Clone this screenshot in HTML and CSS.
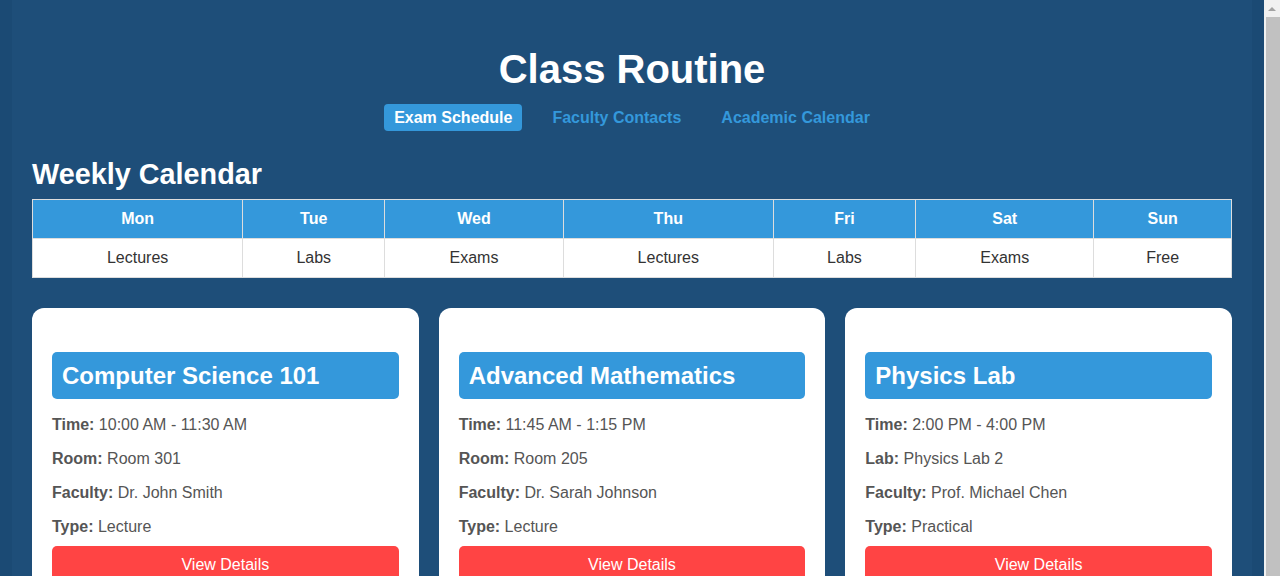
FILE: index.html
```
<!DOCTYPE html>
<html lang="en">
<head>
<meta charset="utf-8">
<title>Class Routine</title>
<link rel="stylesheet" href="styles.css">
</head>
<body>
<div class="container">
  <header class="header">
    <h1 class="title">Class Routine</h1>
    <nav class="nav">
      <a class="nav-link active" href="#">Exam Schedule</a>
      <a class="nav-link" href="#">Faculty Contacts</a>
      <a class="nav-link" href="#">Academic Calendar</a>
    </nav>
  </header>

  <h2 class="section-title">Weekly Calendar</h2>
  <table class="calendar">
    <thead>
      <tr><th>Mon</th><th>Tue</th><th>Wed</th><th>Thu</th><th>Fri</th><th>Sat</th><th>Sun</th></tr>
    </thead>
    <tbody>
      <tr><td>Lectures</td><td>Labs</td><td>Exams</td><td>Lectures</td><td>Labs</td><td>Exams</td><td>Free</td></tr>
    </tbody>
  </table>

  <div class="cards">
    <div class="card">
      <h3 class="card-title">Computer Science 101</h3>
      <p class="info"><strong>Time:</strong> 10:00 AM - 11:30 AM</p>
      <p class="info"><strong>Room:</strong> Room 301</p>
      <p class="info"><strong>Faculty:</strong> Dr. John Smith</p>
      <p class="info"><strong>Type:</strong> Lecture</p>
      <button class="details-btn">View Details</button>
    </div>
    <div class="card">
      <h3 class="card-title">Advanced Mathematics</h3>
      <p class="info"><strong>Time:</strong> 11:45 AM - 1:15 PM</p>
      <p class="info"><strong>Room:</strong> Room 205</p>
      <p class="info"><strong>Faculty:</strong> Dr. Sarah Johnson</p>
      <p class="info"><strong>Type:</strong> Lecture</p>
      <button class="details-btn">View Details</button>
    </div>
    <div class="card">
      <h3 class="card-title">Physics Lab</h3>
      <p class="info"><strong>Time:</strong> 2:00 PM - 4:00 PM</p>
      <p class="info"><strong>Lab:</strong> Physics Lab 2</p>
      <p class="info"><strong>Faculty:</strong> Prof. Michael Chen</p>
      <p class="info"><strong>Type:</strong> Practical</p>
      <button class="details-btn">View Details</button>
    </div>
  </div>
</div>
<div class="scrollbar" aria-hidden="true">
  <div class="scroll-arrow">
    <svg width="16" height="16" viewBox="0 0 16 16"><path d="M4 10 L8 6 L12 10 Z" fill="#a3a3a3"/></svg>
  </div>
  <div class="scroll-thumb"></div>
</div>
</body>
</html>
```

FILE: styles.css
```
* {
  box-sizing: border-box;
}

body {
  margin: 0;
  padding-right: 16px;
  background: #1b4a74;
  font-family: "Liberation Sans", Arial, sans-serif;
  color: #333;
}

.scrollbar {
  position: fixed;
  top: 0;
  right: 0;
  width: 16px;
  height: 100%;
  display: flex;
  flex-direction: column;
  background: #f1f1f1;
}

.scroll-arrow {
  height: 17px;
  display: flex;
  align-items: center;
  justify-content: center;
}

.scroll-thumb {
  flex: 1;
  margin-left: 2px;
  background: #c1c1c1;
}

.container {
  max-width: 1240px;
  margin: 0 auto;
  padding: 20px;
  background: #1e4e79;
}

.header {
  text-align: center;
}

.title {
  margin: 26px 0 12px;
  font-size: 40px;
  line-height: 46px;
  font-weight: bold;
  color: #fff;
}

.nav {
  display: flex;
  justify-content: center;
  gap: 20px;
}

.nav-link {
  padding: 4px 10px;
  border-radius: 4px;
  font-size: 16px;
  line-height: 19px;
  font-weight: bold;
  color: #3498db;
  text-decoration: none;
}

.nav-link.active {
  background: #3498db;
  color: #fff;
}

.section-title {
  margin: 27px 0 8px;
  font-size: 28.8px;
  line-height: 33px;
  font-weight: bold;
  color: #fff;
}

.calendar {
  width: 100%;
  border-collapse: collapse;
  background: #fff;
}

.calendar th,
.calendar td {
  padding: 10px;
  border: 1px solid #ddd;
  font-size: 16px;
  line-height: 18px;
  text-align: center;
}

.calendar th {
  background: #3498db;
  color: #fff;
  font-weight: bold;
}

.calendar td {
  color: #333;
}

.cards {
  display: grid;
  grid-template-columns: repeat(3, 1fr);
  gap: 20px;
  margin-top: 30px;
}

.card {
  background: #fff;
  border-radius: 12px;
  padding: 20px;
}

.card-title {
  margin: 24px 0 13px;
  padding: 10px;
  background: #3498db;
  color: #fff;
  border-radius: 5px;
  font-size: 24px;
  line-height: 27px;
  font-weight: bold;
}

.info {
  margin: 8px 0 6px;
  font-size: 16px;
  line-height: 26px;
  color: #555;
}

.info strong {
  color: #555;
}

.details-btn {
  display: block;
  width: 100%;
  margin: 0;
  padding: 10px;
  border: none;
  border-radius: 5px;
  background: #ff4444;
  color: #fff;
  font-family: "Liberation Sans", Arial, sans-serif;
  font-size: 16px;
  line-height: 18px;
  cursor: pointer;
}
```
